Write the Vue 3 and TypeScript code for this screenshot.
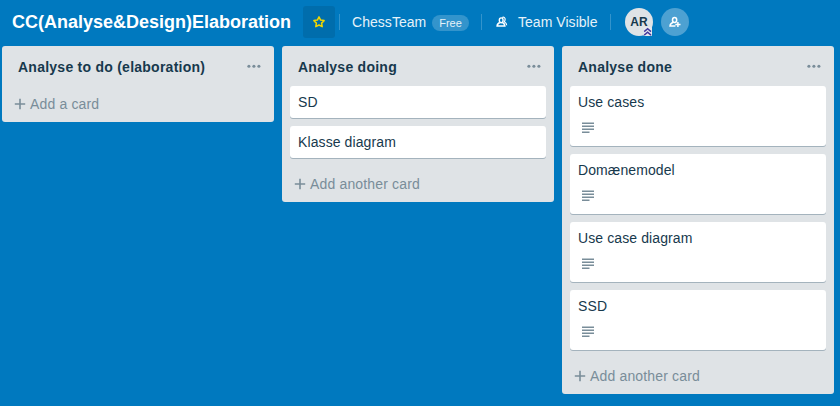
<script setup lang="ts">
interface Card {
  title: string
  description?: boolean
}
interface List {
  title: string
  add: string
  cards: Card[]
}

const lists: List[] = [
  { title: 'Analyse to do (elaboration)', add: 'Add a card', cards: [] },
  {
    title: 'Analyse doing',
    add: 'Add another card',
    cards: [{ title: 'SD' }, { title: 'Klasse diagram' }],
  },
  {
    title: 'Analyse done',
    add: 'Add another card',
    cards: [
      { title: 'Use cases', description: true },
      { title: 'Domænemodel', description: true },
      { title: 'Use case diagram', description: true },
      { title: 'SSD', description: true },
    ],
  },
]
</script>

<template>
  <div class="board">
    <header class="header">
      <h1 class="name">CC(Analyse&amp;Design)Elaboration</h1>
      <button class="star" aria-label="Star">
        <svg width="16" height="16" viewBox="0 0 16 16">
          <path d="M8 2.9 L9.6 6.1 L13.1 6.6 L10.6 9.1 L11.2 12.7 L8 11 L4.8 12.7 L5.4 9.1 L2.9 6.6 L6.4 6.1 Z" fill="none" stroke="#f2d600" stroke-width="1.5" stroke-linejoin="round" />
        </svg>
      </button>
      <span class="divider"></span>
      <span class="team">ChessTeam</span>
      <span class="plan">Free</span>
      <span class="divider second"></span>
      <svg class="people" width="16" height="16" viewBox="0 0 16 16" fill="none" stroke="#fff">
        <ellipse cx="7.2" cy="6.3" rx="1.9" ry="2.4" stroke-width="1.4" />
        <path d="M5.8 8.5 C4.1 9.2 3.2 10.1 3.1 12.1 H10.9 C10.8 10.1 10 9.2 8.5 8.5" stroke-width="1.5" />
        <path d="M8.2 3.5 C9.9 2.6 11.5 4 11.1 5.9 C10.9 6.8 10.6 7.5 10.3 7.8 C11.8 8.7 12.6 9.7 12.7 11.3" stroke-width="1.2" />
      </svg>
      <span class="visibility">Team Visible</span>
      <span class="divider third"></span>
      <span class="avatar">
        AR
        <svg class="rank" width="9" height="9" viewBox="0 0 9 9">
          <rect x="0.5" width="8.5" height="9" rx="1" fill="#e6e8ee" />
          <path d="M1.2 4.6 L4.6 1.7 L8 4.6 M1.2 8.1 L4.6 5.2 L8 8.1" fill="none" stroke="#42389c" stroke-width="1.4" />
        </svg>
      </span>
      <button class="invite" aria-label="Invite">
        <svg width="16" height="16" viewBox="0 0 16 16" fill="none" stroke="#fff">
          <ellipse cx="7.6" cy="5.9" rx="2.1" ry="2.5" stroke-width="1.5" />
          <path d="M6.3 8.3 C4.2 9 3.2 10.1 3 12 H8.4 M10.9 7.9 V13.1 M8.3 10.5 H13.5" stroke-width="1.5" />
        </svg>
      </button>
    </header>

    <main class="lists">
      <section v-for="list in lists" :key="list.title" class="list">
        <div class="list-head">
          <h2>{{ list.title }}</h2>
          <svg width="16" height="16" viewBox="0 0 16 16" fill="#798d99">
            <circle cx="2.9" cy="8.2" r="1.55" />
            <circle cx="7.9" cy="8.2" r="1.55" />
            <circle cx="12.9" cy="8.2" r="1.55" />
          </svg>
        </div>
        <article v-for="card in list.cards" :key="card.title" class="card">
          <div class="card-title">{{ card.title }}</div>
          <div v-if="card.description" class="badges">
            <svg width="20" height="20" viewBox="0 0 20 20" fill="#798d99">
              <path d="M4 4.4h12v1.5H4zM4 7.4h12v1.5H4zM4 10.4h12v1.5H4zM4 13.4h7.5v1.5H4z" />
            </svg>
          </div>
        </article>
        <div class="add">
          <svg width="16" height="16" viewBox="0 0 16 16">
            <path d="M8 2.8 V13.2 M2.8 8 H13.2" stroke="#798d99" stroke-width="1.6" />
          </svg>
          <span>{{ list.add }}</span>
        </div>
      </section>
    </main>
  </div>
</template>

<style>
body {
  margin: 0;
  background: #0079bf;
}
</style>

<style scoped>
.board {
  width: 840px;
  height: 406px;
  overflow: hidden;
  background: #0079bf;
  color: #17394d;
  font: 14px/20px "Liberation Sans", Arial, sans-serif;
}
.header {
  display: flex;
  align-items: center;
  height: 32px;
  padding: 6px 0 8px 12px;
  color: #fff;
  white-space: nowrap;
}
h1,
h2 {
  margin: 0;
}
.name {
  width: 279px;
  margin-right: 12px;
  font-size: 18px;
  line-height: 32px;
}
button {
  display: flex;
  align-items: center;
  justify-content: center;
  padding: 0;
  border: 0;
}
.star {
  width: 32px;
  height: 32px;
  border-radius: 3px;
  background: #006dac;
}
.divider {
  width: 1px;
  height: 16px;
  margin: 0 12px 0 4px;
  background: #3394cc;
}
.team,
.visibility {
  color: #e6f2f9;
  letter-spacing: 0.04px;
}
.team {
  width: 75px;
}
.plan {
  width: 37px;
  height: 16px;
  margin: 2px 0 0 5px;
  border-radius: 8px;
  background: #3394cc;
  color: #e6f2f9;
  font-size: 11px;
  line-height: 17px;
  text-align: center;
}
.second {
  margin: 0 12px;
}
.people {
  margin-right: 8px;
}
.visibility {
  width: 80px;
}
.third {
  margin: 0 14px 0 12px;
}
.avatar {
  position: relative;
  width: 28px;
  height: 28px;
  border-radius: 50%;
  background: #dfe3e6;
  color: #17394d;
  font-size: 12px;
  font-weight: 700;
  line-height: 28px;
  text-align: center;
}
.rank {
  position: absolute;
  right: 1px;
  bottom: 0;
}
.invite {
  width: 28px;
  height: 28px;
  margin-left: 8px;
  border-radius: 50%;
  background: #4da1d2;
}
.lists {
  display: flex;
  align-items: flex-start;
  gap: 8px;
  padding-left: 2px;
}
.list {
  flex: 0 0 272px;
  border-radius: 3px;
  background: #dfe3e6;
}
.list-head {
  display: flex;
  align-items: center;
  justify-content: space-between;
  height: 40px;
  padding: 0 12px 0 16px;
}
.list-head h2 {
  padding-top: 2px;
  font-size: 14px;
  line-height: 20px;
  letter-spacing: 0.25px;
}
.card {
  margin: 0 8px 8px;
  padding: 6px 8px;
  border-radius: 3px;
  background: #fff;
  box-shadow: 0 1px 0 #a4b3bd;
}
.card-title {
  height: 20px;
  letter-spacing: 0.1px;
}
.badges {
  display: flex;
  height: 20px;
  padding: 6px 0 2px;
}
.add {
  display: flex;
  align-items: center;
  gap: 2px;
  height: 36px;
  padding-left: 10px;
  color: #798d99;
  letter-spacing: 0.16px;
}
</style>
